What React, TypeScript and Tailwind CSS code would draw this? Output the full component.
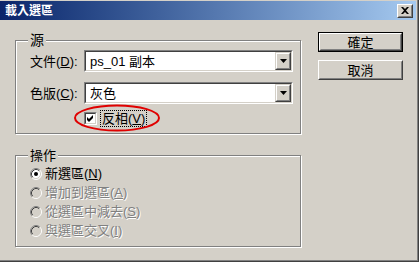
import React from "react";

function Arrow() {
  return (
    <svg width="7" height="4" viewBox="0 0 7 4">
      <path d="M0 0 H7 L3.5 4 Z" fill="#000" />
    </svg>
  );
}

function DropBtn() {
  return (
    <div className="w-[16px] h-full bg-[#d4d0c8] border border-t-[#d4d0c8] border-l-[#d4d0c8] border-b-[#404040] border-r-[#404040]">
      <div className="w-full h-full flex items-center justify-center border border-t-white border-l-white border-b-[#808080] border-r-[#808080]">
        <Arrow />
      </div>
    </div>
  );
}

function Combo({ text }: { text: string }) {
  return (
    <div className="w-[209px] h-[22px] bg-white border border-t-[#808080] border-l-[#808080] border-b-white border-r-white">
      <div className="h-full flex border border-t-[#404040] border-l-[#404040] border-b-[#d4d0c8] border-r-[#d4d0c8]">
        <span className="flex-1 flex items-center pl-[4px] text-[13px]">{text}</span>
        <DropBtn />
      </div>
    </div>
  );
}

function Radio({ checked, disabled }: { checked?: boolean; disabled?: boolean }) {
  return (
    <svg width="12" height="12" viewBox="0 0 12 12" className="shrink-0">
      <circle cx="6" cy="6" r="5" fill={disabled ? "#d4d0c8" : "#fff"} />
      <path d="M2.11 9.89 A5.5 5.5 0 0 1 9.89 2.11" stroke="#808080" strokeWidth="1" fill="none" />
      <path d="M9.89 2.11 A5.5 5.5 0 0 1 2.11 9.89" stroke="#fff" strokeWidth="1" fill="none" />
      <path d="M2.82 9.18 A4.5 4.5 0 0 1 9.18 2.82" stroke="#404040" strokeWidth="1" fill="none" />
      <path d="M9.18 2.82 A4.5 4.5 0 0 1 2.82 9.18" stroke="#d4d0c8" strokeWidth="1" fill="none" />
      {checked && <circle cx="6" cy="6" r="2" fill="#000" />}
    </svg>
  );
}

function RadioRow({
  label,
  mn,
  checked,
  disabled,
}: {
  label: string;
  mn: string;
  checked?: boolean;
  disabled?: boolean;
}) {
  return (
    <div className="h-[19px] flex items-center pl-[14px] gap-[3px]">
      <Radio checked={checked} disabled={disabled} />
      <span
        className={
          disabled
            ? "text-[#808080] [text-shadow:1px_1px_0_#fff]"
            : "text-black"
        }
      >
        {label}(<span className="underline">{mn}</span>)
      </span>
    </div>
  );
}

export default function App() {
  return (
    <div className="relative w-[419px] h-[262px] bg-[#d4d0c8] flex flex-col font-['Liberation_Sans','Noto_Sans_CJK_TC',sans-serif] text-[13px] text-black leading-none overflow-hidden shadow-[inset_-1px_-1px_0_#404040,inset_-2px_-2px_0_#808080]">
      {/* Title bar */}
      <div className="mt-[1px] mr-[3px] h-[19px] flex items-center justify-between pl-[5px] pr-[3px] bg-linear-to-r from-[#0a246a] to-[#a6caf0]">
        <span className="text-white font-bold text-[12px]">載入選區</span>
        <div className="w-[16px] h-[14px] bg-[#d4d0c8] border border-t-white border-l-white border-b-[#404040] border-r-[#404040]">
          <div className="w-full h-full flex items-center justify-center border border-t-[#d4d0c8] border-l-[#d4d0c8] border-b-[#808080] border-r-[#808080]">
            <svg width="8" height="7" viewBox="0 0 8 7">
              <path d="M0 0 H2 L4 2 L6 0 H8 L5 3.5 L8 7 H6 L4 5 L2 7 H0 L3 3.5 Z" fill="#000" />
            </svg>
          </div>
        </div>
      </div>

      {/* Body */}
      <div className="flex items-start">
        <div className="pl-[15px] pt-[20px] flex flex-col">
          {/* Group 1 */}
          <div className="relative w-[286px] h-[94px] border border-[#808080] shadow-[inset_1px_1px_0_#fff,1px_1px_0_#fff] pt-[9px] flex flex-col">
            <span className="absolute -top-[8px] left-[12px] px-[2px] bg-[#d4d0c8] text-[14px]">源</span>
            <div className="flex items-center h-[22px] pl-[14px]">
              <span className="w-[54px]">
                文件(<span className="underline">D</span>):
              </span>
              <Combo text="ps_01 副本" />
            </div>
            <div className="flex items-center h-[22px] pl-[14px] mt-[10px]">
              <span className="w-[54px]">
                色版(<span className="underline">C</span>):
              </span>
              <Combo text="灰色" />
            </div>
            <div className="flex items-center h-[16px] pl-[68px] mt-[6px]">
              <div className="w-[13px] h-[13px] border border-t-[#808080] border-l-[#808080] border-b-white border-r-white">
                <div className="w-full h-full bg-white flex items-center justify-center border border-t-[#404040] border-l-[#404040] border-b-[#d4d0c8] border-r-[#d4d0c8]">
                  <svg width="7" height="7" viewBox="0 0 7 7">
                    <path d="M0 2 L2 4 L6 0 L6 3 L2 7 L0 5 Z" fill="#000" />
                  </svg>
                </div>
              </div>
              <span className="ml-[3px] px-[1px] py-[1px] border border-dotted border-black">
                反相(<span className="underline">V</span>)
              </span>
            </div>
          </div>

          {/* Group 2 */}
          <div className="relative mt-[21px] w-[286px] h-[92px] border border-[#808080] shadow-[inset_1px_1px_0_#fff,1px_1px_0_#fff] pt-[8px] flex flex-col">
            <span className="absolute -top-[7px] left-[12px] px-[2px] bg-[#d4d0c8]">操作</span>
            <RadioRow label="新選區" mn="N" checked />
            <RadioRow label="增加到選區" mn="A" disabled />
            <RadioRow label="從選區中減去" mn="S" disabled />
            <RadioRow label="與選區交叉" mn="I" disabled />
          </div>
        </div>

        {/* Buttons */}
        <div className="ml-[17px] pt-[12px] flex flex-col gap-[8px]">
          <div className="w-[85px] h-[20px] border border-black">
            <div className="w-full h-full border border-t-white border-l-white border-b-[#404040] border-r-[#404040]">
              <div className="w-full h-full flex items-center justify-center border border-transparent border-b-[#808080] border-r-[#808080]">
                確定
              </div>
            </div>
          </div>
          <div className="w-[85px] h-[20px] border border-t-white border-l-white border-b-[#404040] border-r-[#404040]">
            <div className="w-full h-full flex items-center justify-center border border-transparent border-b-[#808080] border-r-[#808080]">
              取消
            </div>
          </div>
        </div>
      </div>

      {/* Red annotation ellipse */}
      <svg
        className="absolute left-[73px] top-[103px] pointer-events-none"
        width="90"
        height="30"
        viewBox="0 0 90 30"
      >
        <ellipse cx="44" cy="15" rx="42" ry="12.5" fill="none" stroke="#e00000" strokeWidth="2" />
      </svg>
    </div>
  );
}
